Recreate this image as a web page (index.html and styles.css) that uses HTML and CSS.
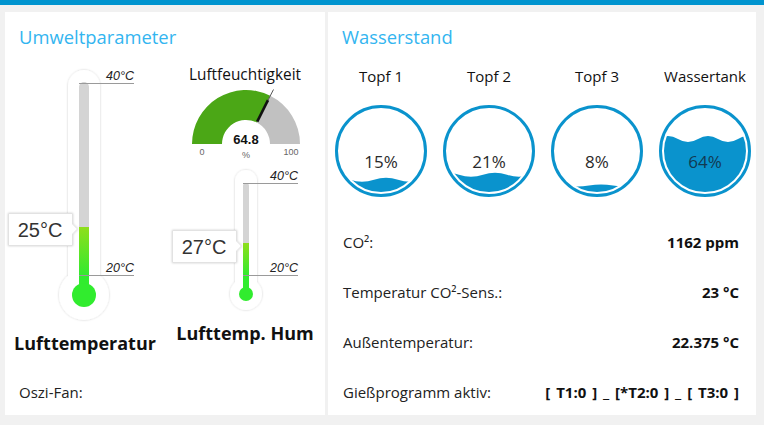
FILE: index.html
```html
<!DOCTYPE html>
<html lang="de">
<head>
<meta charset="utf-8">
<title>Dashboard</title>
<link rel="stylesheet" href="styles.css">
</head>
<body>
<div class="topbar"></div>
<main class="board">
  <section class="card card-left">
    <h2 class="card-title">Umweltparameter</h2>
    <div class="widgets">
      <div class="col col-temp">
        <svg class="thermo thermo-big" width="160" height="265" viewBox="0 0 160 265">
          <defs>
            <filter id="sh1" x="-50%" y="-50%" width="200%" height="200%"><feDropShadow dx="0" dy="0" stdDeviation="1.3" flood-color="#000" flood-opacity="0.2"/></filter>
            <linearGradient id="g1" x1="0" y1="167" x2="0" y2="215" gradientUnits="userSpaceOnUse"><stop offset="0" stop-color="#8fde1c"/><stop offset="1" stop-color="#33ea2e"/></linearGradient>
          </defs>
          <g filter="url(#sh1)" fill="#fff">
            <rect x="63" y="10" width="32" height="230" rx="16"/>
            <circle cx="79" cy="235" r="25"/>
          </g>
          <rect x="74" y="22" width="10" height="210" rx="5" fill="#d4d4d4"/>
          <rect x="74" y="167" width="10" height="68" fill="url(#g1)"/>
          <rect x="74" y="215" width="10" height="20" fill="#31ec2e"/>
          <circle cx="79" cy="235" r="12" fill="#31ec2e"/>
          <line x1="74" y1="23.5" x2="129" y2="23.5" stroke="#9a9a9a" stroke-width="1"/>
          <line x1="74" y1="215.5" x2="129" y2="215.5" stroke="#9a9a9a" stroke-width="1"/>
          <text class="scale" x="129" y="20" text-anchor="end">40°C</text>
          <text class="scale" x="129" y="212" text-anchor="end">20°C</text>
          <path filter="url(#sh1)" d="M3.5,153.5 H67.5 V164 L72.5,169 L67.5,174 V185.5 H3.5 Z" fill="#fff" stroke="#e2e2e2"/>
          <text class="bubble" x="35" y="177" text-anchor="middle">25°C</text>
        </svg>
        <div class="widget-label">Lufttemperatur</div>
      </div>
      <div class="col col-hum">
        <div class="gauge-title">Luftfeuchtigkeit</div>
        <svg class="gauge" width="160" height="75" viewBox="0 0 160 75">
          <path d="M27,59 A54,54 0 0 1 105.21,10.73 L91.76,37.55 A24,24 0 0 0 57,59 Z" fill="#4ba716"/>
          <path d="M105.21,10.73 A54,54 0 0 1 135,59 L105,59 A24,24 0 0 0 91.76,37.55 Z" fill="#c1c1c1"/>
          <line x1="92.2" y1="36.7" x2="103" y2="15.2" stroke="#111" stroke-width="2.6"/>
          <line x1="103" y1="15.2" x2="108.5" y2="4.5" stroke="#555" stroke-width="1"/>
          <text class="gauge-value" x="81" y="59" text-anchor="middle">64.8</text>
          <text class="gauge-small" x="37" y="70" text-anchor="middle">0</text>
          <text class="gauge-small" x="81" y="73" text-anchor="middle">%</text>
          <text class="gauge-small" x="126" y="70" text-anchor="middle">100</text>
        </svg>
        <svg class="thermo thermo-small" width="160" height="155" viewBox="0 0 160 155">
          <defs>
            <filter id="sh2" x="-50%" y="-50%" width="200%" height="200%"><feDropShadow dx="0" dy="0" stdDeviation="1.3" flood-color="#000" flood-opacity="0.2"/></filter>
            <linearGradient id="g2" x1="0" y1="83" x2="0" y2="115" gradientUnits="userSpaceOnUse"><stop offset="0" stop-color="#8fde1c"/><stop offset="1" stop-color="#33ea2e"/></linearGradient>
          </defs>
          <g filter="url(#sh2)" fill="#fff">
            <rect x="70" y="10" width="22" height="128" rx="11"/>
            <circle cx="81" cy="134" r="16"/>
          </g>
          <rect x="78" y="23" width="6" height="110" rx="3" fill="#d4d4d4"/>
          <rect x="78" y="83" width="6" height="51" fill="url(#g2)"/>
          <rect x="78" y="115" width="6" height="19" fill="#31ec2e"/>
          <circle cx="81" cy="134" r="7" fill="#31ec2e"/>
          <line x1="78" y1="23.5" x2="133" y2="23.5" stroke="#9a9a9a" stroke-width="1"/>
          <line x1="78" y1="115.5" x2="133" y2="115.5" stroke="#9a9a9a" stroke-width="1"/>
          <text class="scale" x="133" y="20" text-anchor="end">40°C</text>
          <text class="scale" x="133" y="112" text-anchor="end">20°C</text>
          <path filter="url(#sh2)" d="M7.5,70.5 H71.5 V81 L76.5,86 L71.5,91 V102.5 H7.5 Z" fill="#fff" stroke="#e2e2e2"/>
          <text class="bubble" x="39" y="94" text-anchor="middle">27°C</text>
        </svg>
        <div class="widget-label">Lufttemp. Hum</div>
      </div>
    </div>
    <div class="row row-left"><span class="row-label">Oszi-Fan:</span><span class="row-value"></span></div>
  </section>

  <section class="card card-right">
    <h2 class="card-title">Wasserstand</h2>
    <div class="tanks">
      <div class="tank">
        <div class="tank-name">Topf 1</div>
        <svg class="liquid" width="92" height="92" viewBox="0 0 92 92">
          <defs><clipPath id="c1"><circle cx="46" cy="46" r="41"/></clipPath></defs>
          <circle cx="46" cy="46" r="44.5" fill="none" stroke="#0a93cd" stroke-width="3"/>
          <path clip-path="url(#c1)" fill="#0a93cd" d="M-9,74.7 q12,-4 24,0 t24,0 t24,0 t24,0 t24,0 V92 H-9 Z"/>
          <text class="pct" x="46" y="63" text-anchor="middle">15%</text>
        </svg>
      </div>
      <div class="tank">
        <div class="tank-name">Topf 2</div>
        <svg class="liquid" width="92" height="92" viewBox="0 0 92 92">
          <defs><clipPath id="c2"><circle cx="46" cy="46" r="41"/></clipPath></defs>
          <circle cx="46" cy="46" r="44.5" fill="none" stroke="#0a93cd" stroke-width="3"/>
          <path clip-path="url(#c2)" fill="#0a93cd" d="M-8,69.8 q12,-4 24,0 t24,0 t24,0 t24,0 t24,0 V92 H-8 Z"/>
          <text class="pct" x="46" y="63" text-anchor="middle">21%</text>
        </svg>
      </div>
      <div class="tank">
        <div class="tank-name">Topf 3</div>
        <svg class="liquid" width="92" height="92" viewBox="0 0 92 92">
          <defs><clipPath id="c3"><circle cx="46" cy="46" r="41"/></clipPath></defs>
          <circle cx="46" cy="46" r="44.5" fill="none" stroke="#0a93cd" stroke-width="3"/>
          <path clip-path="url(#c3)" fill="#0a93cd" d="M-10,80.6 q12,-2 24,0 t24,0 t24,0 t24,0 t24,0 V92 H-10 Z"/>
          <text class="pct" x="46" y="63" text-anchor="middle">8%</text>
        </svg>
      </div>
      <div class="tank">
        <div class="tank-name">Wassertank</div>
        <svg class="liquid" width="92" height="92" viewBox="0 0 92 92">
          <defs><clipPath id="c4"><circle cx="46" cy="46" r="41"/></clipPath></defs>
          <circle cx="46" cy="46" r="44.5" fill="none" stroke="#0a93cd" stroke-width="3"/>
          <path clip-path="url(#c4)" fill="#0a93cd" d="M-41,34 q10,-6 20,0 t20,0 t20,0 t20,0 t20,0 t20,0 t20,0 t20,0 t20,0 V92 H-41 Z"/>
          <text class="pct pct-in" x="46" y="63" text-anchor="middle">64%</text>
        </svg>
      </div>
    </div>
    <div class="rows">
      <div class="row"><span class="row-label">CO²:</span><span class="row-value">1162 ppm</span></div>
      <div class="row"><span class="row-label">Temperatur CO²-Sens.:</span><span class="row-value">23 °C</span></div>
      <div class="row"><span class="row-label">Außentemperatur:</span><span class="row-value">22.375 °C</span></div>
      <div class="row"><span class="row-label">Gießprogramm aktiv:</span><span class="row-value row-value-wide">[ T1:0 ] _ [*T2:0 ] _ [ T3:0 ]</span></div>
    </div>
  </section>
</main>
</body>
</html>
```

FILE: styles.css
```css
* { box-sizing: border-box; }

html, body {
  margin: 0;
  padding: 0;
}

body {
  width: 764px;
  height: 425px;
  overflow: hidden;
  background: #f1f1f1;
  font-family: "Open Sans", "Noto Sans", sans-serif;
  color: #222;
}

.topbar {
  height: 5px;
  background: #0094cf;
}

.board {
  display: flex;
  gap: 3px;
  padding: 7px 0 0 5px;
}

.card {
  background: #fff;
  height: 403px;
  overflow: hidden;
}

.card-left { width: 320px; }
.card-right { width: 428px; }

.card-title {
  margin: 0;
  padding: 13px 0 0 14px;
  font-size: 18.4px;
  line-height: 24px;
  font-weight: 500;
  color: #33b5f0;
}

.widgets {
  display: flex;
}

.col {
  width: 160px;
  display: flex;
  flex-direction: column;
  align-items: center;
}

.col svg { display: block; }

.col-temp .thermo { margin-top: 11px; }

.col-hum { padding-top: 16px; }

.gauge-title {
  font-size: 15.4px;
  line-height: 20px;
  color: #111;
}

.widget-label {
  margin-top: 6px;
  font-size: 18px;
  line-height: 25px;
  font-weight: 700;
  color: #111;
}

.scale {
  font-family: "Liberation Sans", Arial, sans-serif;
  font-style: italic;
  font-size: 12.5px;
  fill: #222;
}

.bubble {
  font-family: "Liberation Sans", Arial, sans-serif;
  font-size: 20px;
  fill: #333;
}

.gauge-value {
  font-family: "Liberation Sans", Arial, sans-serif;
  font-weight: 700;
  font-size: 13px;
  fill: #111;
}

.gauge-small {
  font-family: "Liberation Sans", Arial, sans-serif;
  font-size: 9px;
  fill: #666;
}

.row {
  display: flex;
  justify-content: space-between;
  height: 50px;
  line-height: 50px;
  font-size: 15px;
  padding: 0 17px 0 15px;
  white-space: nowrap;
}

.row-left {
  margin-top: 11px;
  padding-left: 14px;
}

.row-value { font-weight: 700; color: #111; }

.row-value-wide { word-spacing: 2px; }

.tanks {
  display: grid;
  grid-template-columns: repeat(4, 108px);
  margin: 17px 0 0 -1px;
}

.tank {
  display: flex;
  flex-direction: column;
  align-items: center;
}

.tank-name {
  font-size: 15px;
  line-height: 20px;
  color: #111;
}

.liquid {
  display: block;
  margin-top: 19px;
}

.pct {
  font-family: "Open Sans", "Noto Sans", sans-serif;
  font-size: 17px;
  fill: #2a2a2a;
}

.pct-in { fill: #123a52; }

.rows { margin-top: 20px; }
```
